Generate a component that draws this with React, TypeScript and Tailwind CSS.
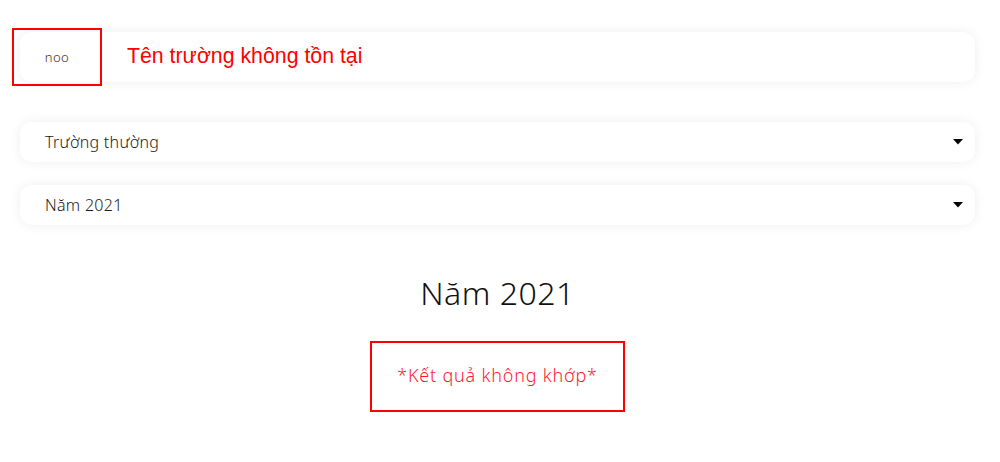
import React from "react";

const Arrow = () => (
  <svg width="10" height="6" viewBox="0 0 10 6" className="shrink-0">
    <path d="M0 0 L10 0 L5 5.5 Z" fill="#000" />
  </svg>
);

export default function App() {
  return (
    <div className="min-h-[462px] w-[1000px] bg-white pl-5 pr-[25px] pt-8 font-['Noto_Sans',sans-serif]">
      <div className="flex h-[50px] items-center rounded-xl bg-white shadow-[0_0_12px_rgba(0,0,0,0.07)]">
        <div className="-ml-2 mt-[-1px] flex h-[58px] w-[90px] shrink-0 items-center justify-center border-2 border-[#ff0000] pt-[3px] text-[13px] font-light tracking-[0.5px] text-[#333]">
          noo
        </div>
        <div className="ml-[25px] font-['Liberation_Sans',sans-serif] text-[21.3px] text-[#ff0000]">
          Tên trường không tồn tại
        </div>
      </div>

      <div className="mt-10 flex h-10 items-center justify-between rounded-xl bg-white pl-[25px] pr-[12px] shadow-[0_0_12px_rgba(0,0,0,0.07)]">
        <span className="text-[16px] font-light tracking-[0.3px] text-[#1a1a1a]">Trường thường</span>
        <Arrow />
      </div>

      <div className="mt-[23px] flex h-10 items-center justify-between rounded-xl bg-white pl-[25px] pr-[12px] shadow-[0_0_12px_rgba(0,0,0,0.07)]">
        <span className="text-[16px] font-light tracking-[0.3px] text-[#1a1a1a]">Năm 2021</span>
        <Arrow />
      </div>

      <div className="mt-[48px] text-center text-[32px] font-light leading-[40px] tracking-[0.5px] text-[#111]">
        Năm 2021
      </div>

      <div className="mt-[28px] flex justify-center">
        <div className="flex h-[71px] w-[255px] items-center justify-center border-2 border-[#ff0000] pb-[2px] text-[18px] font-light tracking-[0.8px] text-[#ff1a33]">
          *Kết quả không khớp*
        </div>
      </div>
    </div>
  );
}
